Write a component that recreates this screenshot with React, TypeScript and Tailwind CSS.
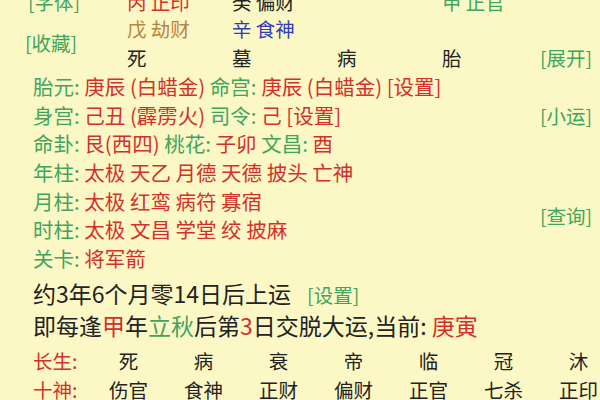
import React from 'react'

const G = 'text-[#3fa55e]'
const R = 'text-[#d3302c]'
const K = 'text-[#222222]'

const changsheng = ['死', '病', '衰', '帝', '临', '冠', '沐']
const shishen = ['伤官', '食神', '正财', '偏财', '正官', '七杀', '正印']

function Row({ label, children }: { label: string; children: React.ReactNode }) {
  return (
    <div className="h-[28.7px] leading-[28.7px] whitespace-nowrap">
      <span className={G}>{label}: </span>
      {children}
    </div>
  )
}

export default function App() {
  return (
    <div className="w-[600px] h-[400px] overflow-hidden bg-[#fcf8c5] font-['Noto_Sans_CJK_SC','Noto_Sans',sans-serif] text-[19.5px] text-[#222222]">
      {/* 藏干 grid, scrolled so the first row is cut */}
      <div className="-mt-[11px] grid grid-cols-[127px_105px_105px_105px_98px_1fr] grid-rows-[25px_29px_29px] items-center whitespace-nowrap">
        <div className={`pl-[28px] ${G}`}>[字体]</div>
        <div className={R}>丙 正印</div>
        <div className={K}>癸 偏财</div>
        <div />
        <div className={G}>甲 正官</div>
        <div />

        <div className={`row-span-2 pl-[25px] ${G}`}>[收藏]</div>
        <div className="text-[#b8843e]">戊 劫财</div>
        <div className="text-[#2f3db8]">辛 食神</div>
        <div />
        <div />
        <div />

        <div>死</div>
        <div>墓</div>
        <div>病</div>
        <div>胎</div>
        <div className={G}>[展开]</div>
      </div>

      <div className="flex">
        <div className="flex-1 pl-[33px] text-[20.5px]">
          <Row label="胎元">
            <span className={R}>庚辰 (白蜡金) </span>
            <span className={G}>命宫: </span>
            <span className={R}>庚辰 (白蜡金) [设置]</span>
          </Row>
          <Row label="身宫">
            <span className={R}>己丑 (霹雳火) </span>
            <span className={G}>司令: </span>
            <span className={R}>己 [设置]</span>
          </Row>
          <Row label="命卦">
            <span className={R}>艮(西四) </span>
            <span className={G}>桃花: </span>
            <span className={R}>子卯 </span>
            <span className={G}>文昌: </span>
            <span className={R}>酉</span>
          </Row>
          <Row label="年柱">
            <span className={R}>太极 天乙 月德 天德 披头 亡神</span>
          </Row>
          <Row label="月柱">
            <span className={R}>太极 红鸾 病符 寡宿</span>
          </Row>
          <Row label="时柱">
            <span className={R}>太极 文昌 学堂 绞 披麻</span>
          </Row>
          <Row label="关卡">
            <span className={R}>将军箭</span>
          </Row>
        </div>
        <div className={`w-[60px] flex flex-col leading-[28.7px] ${G}`}>
          <div className="mt-[30px]">[小运]</div>
          <div className="mt-[71px]">[查询]</div>
        </div>
      </div>

      <div className="pl-[33px] mt-[4px] whitespace-nowrap">
        <div className="h-[32px] leading-[32px] flex items-baseline">
          <span className="text-[23px]">约3年6个月零14日后上运</span>
          <span className={`ml-[16px] ${G}`}>[设置]</span>
        </div>
        <div className="h-[32px] leading-[32px] text-[23px]">
          即每逢<span className={R}>甲</span>年<span className={G}>立秋</span>后第
          <span className={R}>3</span>日交脱大运,当前: <span className={R}>庚寅</span>
        </div>
      </div>

      <div className="mt-[5px] pl-[33px] grid grid-cols-[58px_repeat(7,75px)] auto-rows-[29px] items-center whitespace-nowrap">
        <div className={R}>长生:</div>
        {changsheng.map((c) => (
          <div key={c} className="text-center">{c}</div>
        ))}
        <div className={R}>十神:</div>
        {shishen.map((c) => (
          <div key={c} className="text-center">{c}</div>
        ))}
      </div>
    </div>
  )
}
